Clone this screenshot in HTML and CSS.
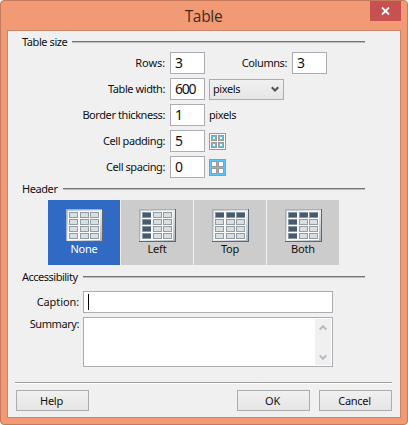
FILE: index.html
```html
<!DOCTYPE html>
<html lang="en">
<head>
<meta charset="utf-8">
<title>Table</title>
<link rel="stylesheet" href="styles.css">
</head>
<body>
<svg width="0" height="0" class="defs" aria-hidden="true">
  <defs>
    <linearGradient id="metal" x1="0" y1="0" x2="1" y2="1"><stop offset="0" stop-color="#bcc5cb"/><stop offset=".5" stop-color="#e9edef"/><stop offset="1" stop-color="#aab4bc"/></linearGradient>
    <g id="cell"><path fill="#fff" d="M0 0h10v7H0z"/><path fill="#929ca4" d="M0 0h9v6H0z"/><path fill="#d9dee0" d="M1 1h7v4H1z"/></g>
    <g id="dark"><path fill="#fff" d="M0 0h10v7H0z"/><path fill="#8b98a3" d="M0 0h9v6H0z"/><path fill="#465b70" d="M1 1h8v4H1z"/></g>
    <g id="grid">
      <path fill="#5c6771" d="M0 0h37v33H0z"/><path fill="#a5b2bd" d="M0 0h36v32H0z"/><path fill="url(#metal)" d="M1 1h35v31H1z"/><path fill="#f5f7f8" d="M2 2h32v29H2z"/>
      <use href="#cell" x="3" y="3"/><use href="#cell" x="14" y="3"/><use href="#cell" x="24" y="3"/>
      <use href="#cell" x="3" y="10"/><use href="#cell" x="14" y="10"/><use href="#cell" x="24" y="10"/>
      <use href="#cell" x="3" y="17"/><use href="#cell" x="14" y="17"/><use href="#cell" x="24" y="17"/>
      <use href="#cell" x="3" y="24"/><use href="#cell" x="14" y="24"/><use href="#cell" x="24" y="24"/>
    </g>
    <g id="left"><use href="#dark" x="3" y="3"/><use href="#dark" x="3" y="10"/><use href="#dark" x="3" y="17"/><use href="#dark" x="3" y="24"/></g>
    <g id="top"><use href="#dark" x="3" y="3"/><use href="#dark" x="14" y="3"/><use href="#dark" x="24" y="3"/></g>
  </defs>
</svg>
<div class="window">
  <header class="titlebar">
    <h1 class="title">Table</h1>
    <div class="close"><svg width="9" height="8" viewBox="0 0 9 8"><path d="M1 .5l7 7M8 .5l-7 7" stroke="#fff" stroke-width="1.8"/></svg></div>
  </header>
  <main class="panel">
    <div class="section"><span>Table size</span><i></i></div>
    <div class="rows">
      <div class="row"><label class="loose">Rows:</label><div class="num">3</div><label class="cols">Columns:</label><div class="num">3</div></div>
      <div class="row"><label>Table width:</label><div class="num">600</div><div class="select"><span>pixels</span><svg width="8" height="7" viewBox="0 0 8 7"><path d="M.7 1.200L4 4.500l3.300-3.300" fill="none" stroke="#555" stroke-width="2.200"/></svg></div></div>
      <div class="row"><label>Border thickness:</label><div class="num">1</div><span class="unit">pixels</span></div>
      <div class="row"><label>Cell padding:</label><div class="num">5</div>
        <svg class="mini" width="17" height="17" shape-rendering="crispEdges"><path fill="#999" d="M0 0h17v17H0z"/><path fill="#fff" d="M1 1h15v15H1z"/><path fill="#999" d="M2 2h6v6H2zM9 2h6v6H9zM2 9h6v6H2zM9 9h6v6H9z"/><path fill="#5fc0f0" d="M3 3h4v4H3zM10 3h4v4h-4zM3 10h4v4H3zM10 10h4v4h-4z"/><path fill="#fff" d="M4 4h2v2H4zM11 4h2v2h-2zM4 11h2v2H4zM11 11h2v2h-2z"/></svg></div>
      <div class="row"><label>Cell spacing:</label><div class="num">0</div>
        <svg class="mini" width="17" height="17" shape-rendering="crispEdges"><path fill="#999" d="M0 0h17v17H0z"/><path fill="#5fc4fa" d="M1 1h15v15H1z"/><path fill="#999" d="M2 2h6v6H2zM9 2h6v6H9zM2 9h6v6H2zM9 9h6v6H9z"/><path fill="#fff" d="M3 3h4v4H3zM10 3h4v4h-4zM3 10h4v4H3zM10 10h4v4h-4z"/></svg></div>
    </div>
    <div class="section header"><span>Header</span><i></i></div>
    <div class="cards">
      <div class="card selected"><svg width="37" height="33"><use href="#grid"/></svg><span>None</span></div>
      <div class="card"><svg width="37" height="33"><use href="#grid"/><use href="#left"/></svg><span>Left</span></div>
      <div class="card"><svg width="37" height="33"><use href="#grid"/><use href="#top"/></svg><span>Top</span></div>
      <div class="card"><svg width="37" height="33"><use href="#grid"/><use href="#left"/><use href="#top"/></svg><span>Both</span></div>
    </div>
    <div class="section access"><span>Accessibility</span><i></i></div>
    <div class="field"><label class="loose">Caption:</label><div class="caption"><b class="caret"></b></div></div>
    <div class="field"><label>Summary:</label><div class="area"><div class="scroll">
      <svg width="8" height="7" viewBox="0 0 8 7"><path d="M.7 5.500L4 2.200l3.300 3.300" fill="none" stroke="#bbb" stroke-width="2.200"/></svg>
      <svg width="8" height="7" viewBox="0 0 8 7"><path d="M.7 1.500L4 4.800l3.300-3.300" fill="none" stroke="#bbb" stroke-width="2.200"/></svg>
    </div></div></div>
    <footer class="footer"><div class="button help">Help</div><div class="button">OK</div><div class="button">Cancel</div></footer>
  </main>
</div>
</body>
</html>
```
FILE: styles.css
```css
* { box-sizing: border-box; }
body { margin: 0; background: #fff; color: #111; font: 11px/14px "Noto Sans", sans-serif; letter-spacing: -.42px; overflow: hidden; }
svg { display: block; flex: none; }
.defs { position: absolute; }
.window { width: 408px; height: 425px; border: 1px solid #c47b5d; border-radius: 4px; background: #f29a74; padding: 0 6px; }
.titlebar { height: 29px; display: flex; justify-content: flex-end; }
.title { flex: 1; margin: 0; padding-left: 30px; text-align: center; font: 15.5px/30px "Open Sans", sans-serif; letter-spacing: -.3px; color: #3d2c25; }
.close { width: 31px; height: 20px; background: #c75050; display: flex; align-items: center; justify-content: center; }
.panel { width: 394px; height: 388px; border: 1px solid #c98469; background: #f0f0f0; }
.section { height: 14px; margin: 4px 35px 0 14px; display: flex; white-space: nowrap; }
.section i { flex: 1; height: 2px; margin: 6px 0 0 5px; background: #777; border-bottom: 1px solid #bbb; }
.rows { margin-top: 3px; display: flex; flex-direction: column; gap: 4px; }
.row { height: 22px; display: flex; align-items: center; }
.row label { width: 157px; margin-right: 5px; text-align: right; white-space: nowrap; }
.row .cols { width: 82px; }
.row .loose, .field .loose { letter-spacing: -.1px; }
.num { width: 35px; height: 22px; padding-left: 4px; background: #fff; border: 1px solid #abadb3; font-size: 14px; line-height: 19px; letter-spacing: -1.2px; }
.select { width: 75px; height: 21px; margin-left: 4px; padding: 0 4px 0 3px; border: 1px solid #acacac; background: linear-gradient(#f0f0f0, #e6e6e6); display: flex; align-items: center; justify-content: space-between; }
.unit { margin-left: 4px; }
.mini { margin-left: 4px; }
.header { margin-top: 4px; }
.cards { margin: 4px 0 0 40px; display: flex; gap: 1px; }
.card { width: 72px; height: 65px; padding-top: 9px; background: #ccc; display: flex; flex-direction: column; align-items: center; letter-spacing: -.2px; }
.selected { background: #316ac5; color: #fff; }
.access { margin-top: 5px; letter-spacing: -.5px; }
.field { display: flex; margin-top: 7px; }
.field + .field { margin-top: 4px; }
.field label { width: 71px; margin: 4px 4px 0 0; text-align: right; white-space: nowrap; }
.field + .field label { margin-top: 0; }
.caption, .area { width: 250px; background: #fff; border: 1px solid #abadb3; }
.caption { height: 22px; padding: 2px 4px; }
.caret { display: block; width: 1px; height: 16px; background: #000; }
.area { height: 50px; padding: 1px; display: flex; justify-content: flex-end; }
.scroll { width: 16px; background: #f0f0f0; display: flex; flex-direction: column; align-items: center; justify-content: space-between; padding: 5px 0 4px; }
.footer { width: 377px; margin: 15px 0 0 7px; padding: 7px 0 0 1px; border-top: 1px solid #a0a0a0; box-shadow: inset 0 1px #fff; display: flex; gap: 9px; }
.button { width: 73px; height: 21px; border: 1px solid #acacac; background: linear-gradient(#f0f0f0, #e5e5e5); text-align: center; line-height: 19px; padding-right: 2px; letter-spacing: -.3px; }
.help { margin-right: auto; }
```
